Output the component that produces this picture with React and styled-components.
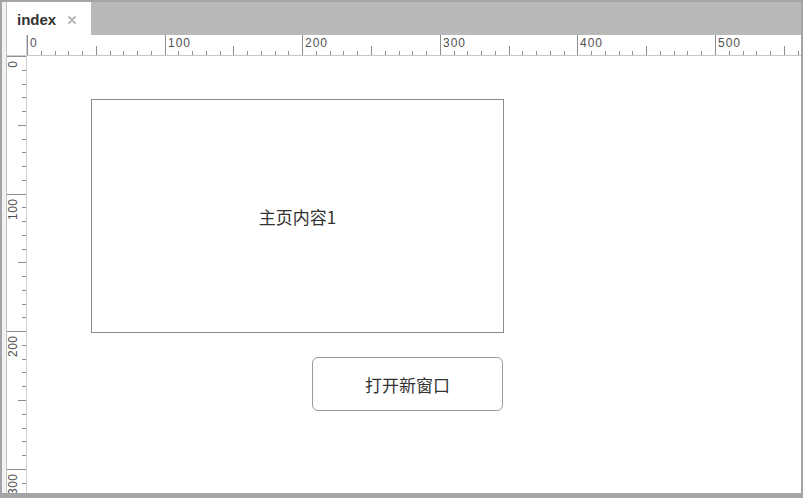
import React from "react";
import styled, { createGlobalStyle } from "styled-components";

const Global = createGlobalStyle`
  html, body { margin: 0; padding: 0; background: #ffffff; }
  body { font-family: "Liberation Sans", Arial, sans-serif; }
  * { box-sizing: border-box; }
`;

const STEP = 13.76;

const Frame = styled.div`
  width: 803px;
  height: 498px;
  border-style: solid;
  border-color: #a4a4a4;
  border-width: 2px 2px 5px 2px;
  background: #f2f2f2;
  padding-left: 4px;
  display: flex;
  flex-direction: column;
  overflow: hidden;
`;

const Inner = styled.div`
  flex: 1;
  display: flex;
  flex-direction: column;
  border-left: 1px solid #c2c2c2;
  min-height: 0;
`;

const TabBar = styled.div`
  height: 33px;
  flex: none;
  background: #b9b9b9;
  display: flex;
  align-items: stretch;
`;

const Tab = styled.div`
  width: 84px;
  background: #ffffff;
  display: flex;
  align-items: center;
  padding: 2px 0 0 10px;
  gap: 12px;
`;

const TabTitle = styled.span`
  font-family: "Liberation Sans", Arial, sans-serif;
  font-weight: bold;
  font-size: 15px;
  color: #333333;
`;

const CloseIcon = styled.svg`
  width: 8px;
  height: 8px;
  display: block;
`;

const Workspace = styled.div`
  flex: 1;
  display: grid;
  grid-template-columns: 20px 1fr;
  grid-template-rows: 21px 1fr;
  background: #ffffff;
  min-height: 0;
`;

const Corner = styled.div`
  border-right: 1px solid #cfcfcf;
  border-bottom: 1px solid #cfcfcf;
  background: #ffffff;
`;

const HRuler = styled.div`
  border-bottom: 1px solid #c8c8c8;
  overflow: hidden;
  svg { display: block; }
`;

const VRuler = styled.div`
  border-right: 1px solid #cfcfcf;
  overflow: hidden;
  svg { display: block; }
`;

const Canvas = styled.div`
  position: relative;
  background: #ffffff;
  overflow: hidden;
`;

const Panel = styled.div`
  position: absolute;
  left: ${(p) => p.$x}px;
  top: ${(p) => p.$y}px;
  width: ${(p) => p.$w}px;
  height: ${(p) => p.$h}px;
  border: 1px solid #8c8c8c;
  background: #ffffff;
  display: flex;
  align-items: center;
  justify-content: center;
  font-family: "Noto Sans CJK SC", "Liberation Sans", sans-serif;
  font-size: 17px;
  color: #333333;
`;

const Button = styled.button`
  position: absolute;
  left: ${(p) => p.$x}px;
  top: ${(p) => p.$y}px;
  width: ${(p) => p.$w}px;
  height: ${(p) => p.$h}px;
  border: 1px solid #9a9a9a;
  border-radius: 6px;
  background: #ffffff;
  display: flex;
  align-items: center;
  justify-content: center;
  padding: 0;
  font-family: "Noto Sans CJK SC", "Liberation Sans", sans-serif;
  font-size: 17px;
  color: #333333;
  cursor: pointer;
`;

function HorizontalRuler() {
  const w = 774;
  const n = Math.floor(w / STEP);
  const items = [];
  for (let i = 0; i <= n; i++) {
    const x = Math.round(i * STEP) + 0.5;
    const len = i % 10 === 0 ? 20 : i % 5 === 0 ? 9 : 4;
    items.push(<line key={"t" + i} x1={x} x2={x} y1={20 - len} y2={20} stroke="#8e8e8e" strokeWidth="1" />);
    if (i % 10 === 0) {
      items.push(
        <text key={"l" + i} x={x + 2.5} y={12} fontSize="12" letterSpacing="1" fill="#505050" fontFamily="Liberation Sans, Arial, sans-serif">
          {i * 10}
        </text>
      );
    }
  }
  return (
    <svg width={w} height={20}>
      {items}
    </svg>
  );
}

function VerticalRuler() {
  const h = 437;
  const n = Math.floor(h / STEP);
  const items = [];
  for (let i = 0; i <= n; i++) {
    const y = Math.round(i * STEP) + 0.5;
    const len = i % 10 === 0 ? 20 : i % 5 === 0 ? 9 : 5;
    items.push(<line key={"t" + i} y1={y} y2={y} x1={20 - len} x2={20} stroke="#8e8e8e" strokeWidth="1" />);
    if (i % 10 === 0) {
      items.push(
        <text
          key={"l" + i}
          transform={`translate(9.5 ${y + 4}) rotate(-90)`}
          textAnchor="end"
          fontSize="12"
          letterSpacing="0.5"
          fill="#505050"
          fontFamily="Liberation Sans, Arial, sans-serif"
        >
          {i * 10}
        </text>
      );
    }
  }
  return (
    <svg width={20} height={h}>
      {items}
    </svg>
  );
}

export default function App() {
  return (
    <>
      <Global />
      <Frame>
        <Inner>
          <TabBar>
            <Tab>
              <TabTitle>index</TabTitle>
              <CloseIcon viewBox="0 0 8 8">
                <path d="M1 1 L7 7 M7 1 L1 7" stroke="#b4b4b4" strokeWidth="1.8" strokeLinecap="round" />
              </CloseIcon>
            </Tab>
          </TabBar>
          <Workspace>
            <Corner />
            <HRuler>
              <HorizontalRuler />
            </HRuler>
            <VRuler>
              <VerticalRuler />
            </VRuler>
            <Canvas>
              <Panel $x={64} $y={43} $w={413} $h={234}>主页内容1</Panel>
              <Button $x={285} $y={301} $w={191} $h={54}>打开新窗口</Button>
            </Canvas>
          </Workspace>
        </Inner>
      </Frame>
    </>
  );
}
